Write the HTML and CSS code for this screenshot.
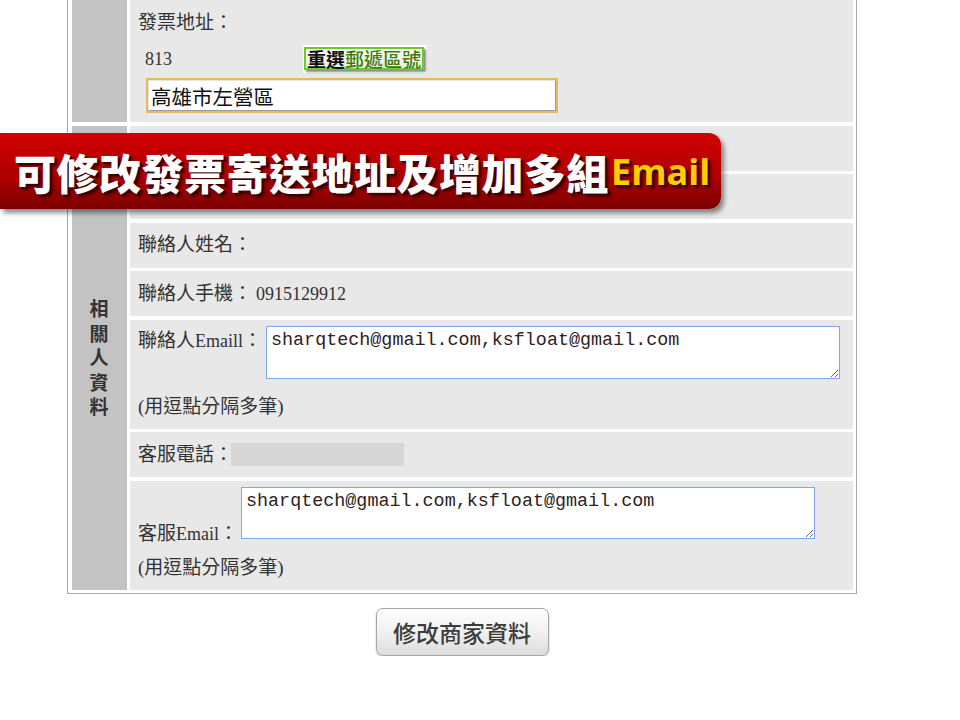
FILE: index.html
```html
<!DOCTYPE html>
<html lang="zh-Hant">
<head>
<meta charset="utf-8">
<title>修改商家資料</title>
<link rel="stylesheet" href="styles.css">
</head>
<body>
<div class="page">
  <div class="form">
    <div class="head head-top"></div>
    <div class="cell cell-addr">
      <div class="lbl-line">發票地址：</div>
      <div class="zip-line">
        <span class="zip en">813</span>
        <span class="zipbtn"><span class="zipbtn-in"><span class="k">重選</span><span class="g">郵遞區號</span></span></span>
      </div>
      <input class="addr" type="text" value="高雄市左營區">
    </div>

    <div class="head head-side">相<br>關<br>人<br>資<br>料</div>
    <div class="cell cell-mid"></div>
    <div class="cell cell-mid"></div>
    <div class="cell cell-mid">聯絡人姓名：</div>
    <div class="cell cell-mid">聯絡人手機：<span class="en num">0915129912</span></div>
    <div class="cell cell-tall cell-e">
      <div class="line">
        <span class="lbl lbl-e">聯絡人<span class="en">Emaill</span>：</span>
        <textarea class="mails mails-e">sharqtech@gmail.com,ksfloat@gmail.com</textarea>
      </div>
      <div class="note note-e">(用逗點分隔多筆)</div>
    </div>
    <div class="cell cell-mid">客服電話：<span class="redact"></span></div>
    <div class="cell cell-tall cell-g">
      <div class="line">
        <span class="lbl lbl-g">客服<span class="en">Email</span>：</span>
        <textarea class="mails mails-g">sharqtech@gmail.com,ksfloat@gmail.com</textarea>
      </div>
      <div class="note note-g">(用逗點分隔多筆)</div>
    </div>
  </div>
  <div class="actions">
    <button class="submit" type="button">修改商家資料</button>
  </div>
</div>

<div class="banner">
  <span class="banner-zh">可修改發票寄送地址及增加多組</span><span class="banner-en">Email</span>
</div>
</body>
</html>
```

FILE: styles.css
```css
html, body {
  margin: 0;
  padding: 0;
  background: #ffffff;
}

body {
  font-family: "Liberation Serif", "Noto Sans CJK TC", serif;
  font-size: 19px;
  color: #333333;
  overflow: hidden;
}

.page {
  width: 790px;
  margin-left: 67px;
  margin-top: -4.5px;
}

.form {
  box-sizing: border-box;
  width: 790px;
  display: grid;
  grid-template-columns: 55px 1fr;
  grid-template-rows: 122px 45px 45px 45px 45px 109px 45px 109px;
  gap: 3.5px;
  padding: 3.5px;
  border: 1px solid #a9a9a9;
  background: #ffffff;
}

.head {
  background: #c3c3c3;
}

.head-top {
  grid-row: 1;
}

.head-side {
  grid-row: 2 / 9;
  display: flex;
  align-items: center;
  justify-content: center;
  text-align: center;
  font-family: "Noto Sans CJK TC", sans-serif;
  font-weight: 700;
  font-size: 19px;
  line-height: 24.5px;
  color: #333333;
}

.cell {
  background: #e8e8e8;
  padding-left: 8px;
  box-sizing: border-box;
}

.en {
  font-size: 18px;
}

.num {
  margin-left: 4px;
}

.cell-mid {
  display: flex;
  align-items: center;
  line-height: 22px;
}

/* invoice address row */
.cell-addr {
  display: flex;
  flex-direction: column;
  align-items: flex-start;
}

.lbl-line {
  padding-top: 1px;
  line-height: 44px;
}

.zip-line {
  display: flex;
  align-items: center;
  height: 27px;
  padding-left: 7px;
}

.zip {
  display: inline-block;
  width: 158px;
  line-height: 22px;
}

.zipbtn {
  display: inline-flex;
  background: #ffffff;
  padding: 2px 3px 3px 1px;
}

.zipbtn-in {
  display: inline-block;
  border: 2px solid #6acb2a;
  background: linear-gradient(#ffffff, #e6eedf);
  box-shadow: 2px 2px 2px #8a8a8a;
  font-family: "Noto Sans CJK TC", sans-serif;
  font-weight: 700;
  font-size: 19px;
  line-height: 19px;
  padding: 0 1px;
}

.zipbtn-in .k {
  color: #111111;
}

.zipbtn-in .g {
  color: #3d7a06;
  font-weight: 500;
}

.addr {
  box-sizing: border-box;
  width: 408px;
  height: 31px;
  margin: 8px 0 0 10px;
  padding: 0 2px;
  border: 1px solid;
  border-color: #e4e4e4 #9c9c9c #9c9c9c #e4e4e4;
  box-shadow: 0 0 0 2px #e3b966;
  font-family: "Liberation Serif", "Noto Sans CJK TC", serif;
  font-size: 20.5px;
  color: #111111;
  background: #ffffff;
  outline: none;
}

/* email rows */
.cell-tall {
  display: flex;
  flex-direction: column;
}

.line {
  display: flex;
  align-items: flex-start;
}

.lbl {
  display: inline-block;
  line-height: 22px;
  white-space: nowrap;
}

.lbl-e {
  width: 128px;
  margin-top: 4.5px;
}

.lbl-g {
  width: 103px;
  margin-top: 36px;
}

.cell-e {
  padding-top: 6px;
}

.cell-g {
  padding-top: 6.5px;
}

.mails {
  box-sizing: border-box;
  width: 574px;
  margin: 0;
  padding: 3px 4px;
  border: 1px solid #7fa6ee;
  background: #ffffff;
  font-family: "Liberation Mono", monospace;
  font-size: 18.4px;
  line-height: 21px;
  color: #2e2222;
  outline: none;
}

.mails-e {
  height: 53px;
}

.mails-g {
  height: 52px;
}

.note {
  line-height: 22px;
}

.note-e {
  margin-top: 17.5px;
}

.note-g {
  margin-top: 11.5px;
}

.redact {
  display: inline-block;
  width: 173px;
  height: 23px;
  margin-left: -2px;
  background: #d6d6d6;
}

/* submit */
.actions {
  display: flex;
  justify-content: center;
  padding-top: 14px;
}

.submit {
  box-sizing: border-box;
  width: 173px;
  height: 48px;
  border: 1px solid #a6a6a6;
  border-radius: 7px;
  background: linear-gradient(#fefefe, #f1f1f1 50%, #dcdcdc);
  box-shadow: 0 1px 2px rgba(0, 0, 0, 0.25);
  font-family: "Noto Sans CJK TC", sans-serif;
  font-size: 23px;
  font-weight: 500;
  color: #3c3c3c;
  padding: 0;
}

/* overlay banner */
.banner {
  position: absolute;
  left: 0;
  top: 133px;
  width: 721px;
  height: 76px;
  box-sizing: border-box;
  padding-left: 14px;
  display: flex;
  align-items: center;
  border-radius: 0 12px 12px 0;
  background: linear-gradient(#d20000, #b00000 55%, #7c0000);
  box-shadow: 3px 4px 5px rgba(0, 0, 0, 0.45);
  white-space: nowrap;
}

.banner-zh {
  font-family: "Noto Sans CJK TC", sans-serif;
  font-weight: 900;
  font-size: 42px;
  letter-spacing: 0.5px;
  color: #ffffff;
  text-shadow: 2px 2px 0 #3c0000, 3px 3px 3px rgba(0, 0, 0, 0.6);
}

.banner-en {
  font-family: "Open Sans", sans-serif;
  font-weight: 700;
  font-size: 36px;
  color: #ffcc00;
  margin-left: 2px;
  text-shadow: 2px 2px 0 #3c0000, 3px 3px 3px rgba(0, 0, 0, 0.6);
}
```
